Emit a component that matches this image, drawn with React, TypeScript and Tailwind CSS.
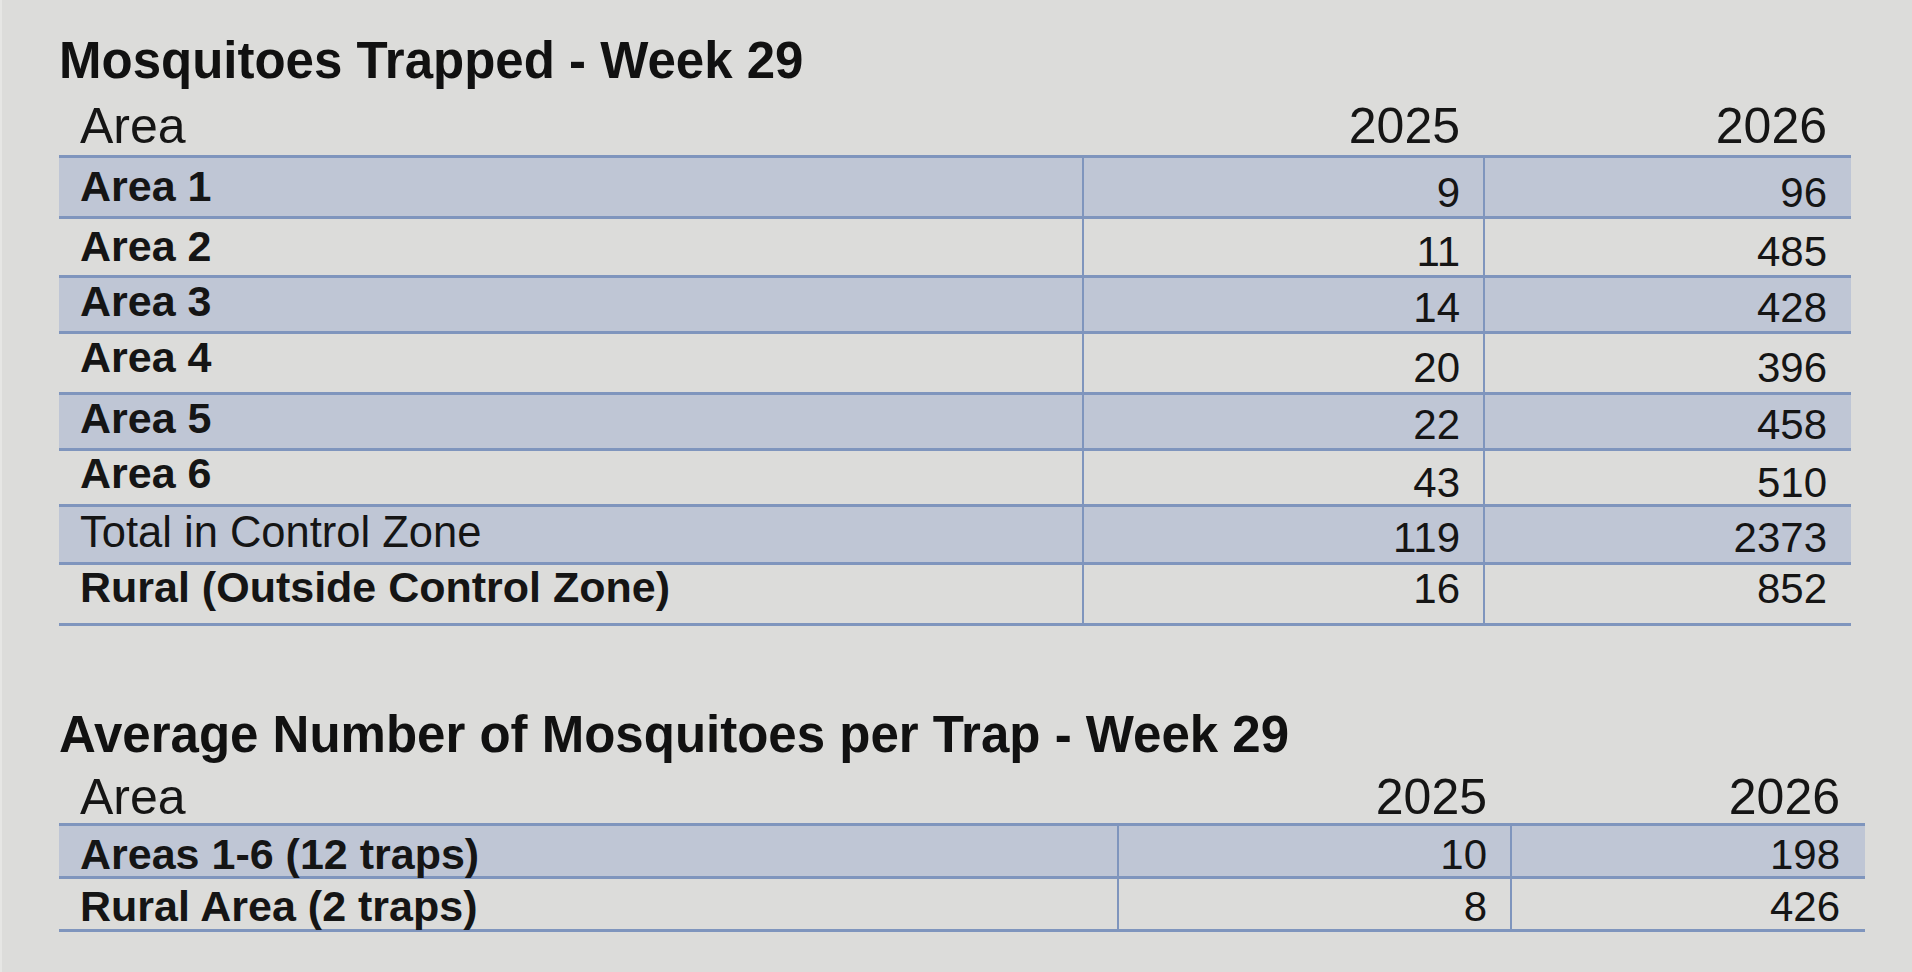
type Row = {
  label: string;
  a: string;
  b: string;
  shade: boolean;
  bold: boolean;
  h: string;
  lt: string;
  nt: string;
};

const trapped: Row[] = [
  { label: "Area 1", a: "9", b: "96", shade: true, bold: true, h: "h-[61px]", lt: "pt-[7px]", nt: "pt-[14px]" },
  { label: "Area 2", a: "11", b: "485", shade: false, bold: true, h: "h-[59px]", lt: "pt-[6px]", nt: "pt-[12px]" },
  { label: "Area 3", a: "14", b: "428", shade: true, bold: true, h: "h-[56px]", lt: "pt-[2px]", nt: "pt-[9px]" },
  { label: "Area 4", a: "20", b: "396", shade: false, bold: true, h: "h-[61px]", lt: "pt-[2px]", nt: "pt-[13px]" },
  { label: "Area 5", a: "22", b: "458", shade: true, bold: true, h: "h-[56px]", lt: "pt-[2px]", nt: "pt-[9px]" },
  { label: "Area 6", a: "43", b: "510", shade: false, bold: true, h: "h-[56px]", lt: "pt-[1px]", nt: "pt-[11px]" },
  { label: "Total in Control Zone", a: "119", b: "2373", shade: true, bold: false, h: "h-[58px]", lt: "pt-[4px]", nt: "pt-[10px]" },
  { label: "Rural (Outside Control Zone)", a: "16", b: "852", shade: false, bold: true, h: "h-[61px]", lt: "pt-[1px]", nt: "pt-[3px]" },
];

const average: Row[] = [
  { label: "Areas 1-6 (12 traps)", a: "10", b: "198", shade: true, bold: true, h: "h-[53px]", lt: "pt-[7px]", nt: "pt-[8px]" },
  { label: "Rural Area (2 traps)", a: "8", b: "426", shade: false, bold: true, h: "h-[53px]", lt: "pt-[6px]", nt: "pt-[7px]" },
];

function Header({ cols, padA, padB }: { cols: string; padA: string; padB: string }) {
  return (
    <div className={`grid ${cols} text-[50px] leading-none text-[#151515]`}>
      <div className="pl-[21px]">Area</div>
      <div className={`text-right ${padA}`}>2025</div>
      <div className={`text-right ${padB}`}>2026</div>
    </div>
  );
}

function TableRow({ row, cols, padA, padB }: { row: Row; cols: string; padA: string; padB: string }) {
  return (
    <div
      className={`grid ${cols} ${row.h} border-b-[3px] border-[#7f95bd] ${row.shade ? "bg-[#bfc6d5]" : ""}`}
    >
      <div
        className={`pl-[21px] ${row.lt} leading-none text-[#151515] ${row.bold ? "text-[43px] font-bold" : "text-[43.5px]"}`}
      >
        {row.label}
      </div>
      <div className={`border-l-2 border-[#7f95bd] text-right ${padA} ${row.nt} text-[42px] leading-none text-[#151515]`}>
        {row.a}
      </div>
      <div className={`border-l-2 border-[#7f95bd] text-right ${padB} ${row.nt} text-[42px] leading-none text-[#151515]`}>
        {row.b}
      </div>
    </div>
  );
}

export default function App() {
  return (
    <main className="min-h-screen border-l-2 border-[#e6e6e4] bg-[#dcdcda] pt-[35px] pl-[57px] font-[Liberation_Sans,Arial,sans-serif]">
      <section className="w-[1792px]">
        <h2 className="text-[51px] font-bold leading-none text-[#111]">Mosquitoes Trapped - Week 29</h2>
        <div className="mt-[15px]">
          <Header cols="grid-cols-[1023px_401px_368px]" padA="pr-[23px]" padB="pr-[24px]" />
        </div>
        <div className="mt-[4px] border-t-[3px] border-[#7f95bd]">
          {trapped.map((row) => (
            <TableRow key={row.label} row={row} cols="grid-cols-[1023px_401px_368px]" padA="pr-[23px]" padB="pr-[24px]" />
          ))}
        </div>
      </section>

      <section className="mt-[83px] w-[1806px]">
        <h2 className="text-[51px] font-bold leading-none text-[#111]">
          Average Number of Mosquitoes per Trap - Week 29
        </h2>
        <div className="mt-[12px]">
          <Header cols="grid-cols-[1058px_393px_355px]" padA="pr-[23px]" padB="pr-[25px]" />
        </div>
        <div className="mt-[1px] border-t-[3px] border-[#7f95bd]">
          {average.map((row) => (
            <TableRow key={row.label} row={row} cols="grid-cols-[1058px_393px_355px]" padA="pr-[23px]" padB="pr-[25px]" />
          ))}
        </div>
      </section>
    </main>
  );
}
